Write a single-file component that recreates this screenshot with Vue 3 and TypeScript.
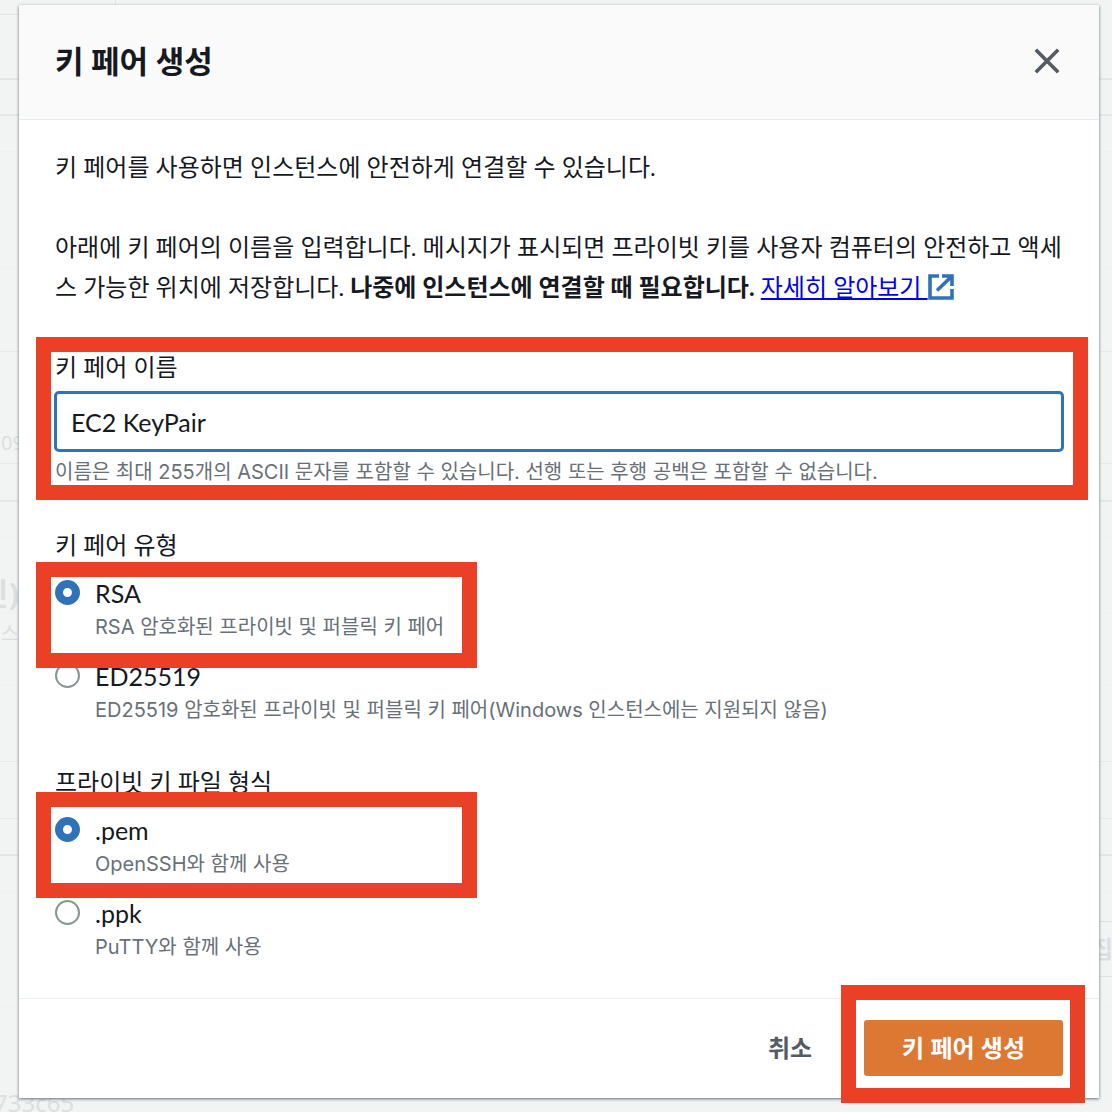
<script setup lang="ts">
import { ref } from 'vue'

interface Option {
  value: string
  label: string
  description: string
}

interface Strip {
  height: number
  tone: 'line' | 'shade' | 'faint'
  left?: string
  size?: 'value' | 'heading' | 'note'
}

const keyName = ref('EC2 KeyPair')
const keyType = ref('rsa')
const fileFormat = ref('pem')

const keyTypes: Option[] = [
  { value: 'rsa', label: 'RSA', description: 'RSA 암호화된 프라이빗 및 퍼블릭 키 페어' },
  {
    value: 'ed25519',
    label: 'ED25519',
    description: 'ED25519 암호화된 프라이빗 및 퍼블릭 키 페어(Windows 인스턴스에는 지원되지 않음)',
  },
]

const fileFormats: Option[] = [
  { value: 'pem', label: '.pem', description: 'OpenSSH와 함께 사용' },
  { value: 'ppk', label: '.ppk', description: 'PuTTY와 함께 사용' },
]

const strips: Strip[] = [
  { height: 80, tone: 'shade' },
  { height: 36, tone: 'shade' },
  { height: 36, tone: 'faint' },
  { height: 116, tone: 'faint' },
  { height: 84, tone: 'line' },
  { height: 112, tone: 'line', left: '.09', size: 'value' },
  { height: 38, tone: 'shade' },
  { height: 36, tone: 'faint' },
  { height: 76, tone: 'faint', left: '인)', size: 'heading' },
  { height: 72, tone: 'faint', left: '인스', size: 'note' },
  { height: 76, tone: 'line' },
  { height: 57, tone: 'line' },
  { height: 37, tone: 'shade' },
  { height: 36, tone: 'faint' },
  { height: 115, tone: 'faint' },
]
</script>

<template>
  <main class="screen" lang="ko">
    <div class="backdrop" aria-hidden="true">
      <div
        v-for="(strip, i) in strips"
        :key="i"
        class="strip"
        :class="[strip.tone, strip.size]"
        :style="{ height: strip.height + 'px' }"
      >
        <span v-if="strip.left">{{ strip.left }}</span>
      </div>
      <span class="ghost-tab"></span>
      <span class="ghost-edit">편집</span>
      <span class="ghost-id">733c65</span>
    </div>

    <section class="modal" role="dialog" aria-labelledby="modal-title">
      <header class="modal-header">
        <h1 id="modal-title">키 페어 생성</h1>
        <button class="close" type="button" aria-label="닫기">
          <svg viewBox="0 0 26 26" width="26" height="26" fill="none" stroke="#545b64" stroke-width="3.6">
            <path d="M1.8 1.8 24.2 24.2M24.2 1.8 1.8 24.2" />
          </svg>
        </button>
      </header>

      <form id="key-form" class="modal-body" @submit.prevent>
        <p>키 페어를 사용하면 인스턴스에 안전하게 연결할 수 있습니다.</p>
        <p>
          아래에 키 페어의 이름을 입력합니다. 메시지가 표시되면 프라이빗 키를 사용자 컴퓨터의 안전하고 액세스 가능한 위치에 저장합니다.
          <strong>나중에 인스턴스에 연결할 때 필요합니다.</strong>{{ ' ' }}<a class="learn" href="#">자세히 알아보기&nbsp;</a><svg
            class="external" viewBox="0 0 26 26" width="26" height="26" fill="none" stroke="#3072b9" stroke-width="3.6"
          >
            <path d="M11 2H2v22h22V15" />
            <path d="M14 2H24v10M23.5 2.5 9 16.5" />
          </svg>
        </p>

        <div class="field highlight">
          <label for="key-name">키 페어 이름</label>
          <input id="key-name" v-model="keyName" class="text-input" type="text" aria-describedby="key-hint" />
          <small id="key-hint" class="hint">이름은 최대 255개의 ASCII 문자를 포함할 수 있습니다. 선행 또는 후행 공백은 포함할 수 없습니다.</small>
        </div>

        <fieldset>
          <legend>키 페어 유형</legend>
          <div v-for="(o, i) in keyTypes" :key="o.value" class="option" :class="{ highlight: i === 0 }">
            <input :id="o.value" v-model="keyType" type="radio" name="key-type" :value="o.value" />
            <label :for="o.value">
              <span class="option-name">{{ o.label }}</span>
              <span class="hint">{{ o.description }}</span>
            </label>
          </div>
        </fieldset>

        <fieldset class="formats">
          <legend>프라이빗 키 파일 형식</legend>
          <div v-for="(o, i) in fileFormats" :key="o.value" class="option" :class="{ highlight: i === 0 }">
            <input :id="o.value" v-model="fileFormat" type="radio" name="file-format" :value="o.value" />
            <label :for="o.value">
              <span class="option-name">{{ o.label }}</span>
              <span class="hint">{{ o.description }}</span>
            </label>
          </div>
        </fieldset>
      </form>

      <footer class="modal-footer">
        <button class="cancel" type="button">취소</button>
        <div class="submit-wrap highlight">
          <button class="submit" type="submit" form="key-form">키 페어 생성</button>
        </div>
      </footer>
    </section>
  </main>
</template>

<style>
body {
  margin: 0;
  background: #f2f4f4;
}
</style>

<style scoped>
.screen {
  position: relative;
  min-height: 100vh;
  box-sizing: border-box;
  padding: 5px 13px 14px 19px;
  overflow: hidden;
  background: #f2f4f4;
  color: #16191f;
  font-family: Lato, 'Noto Sans CJK KR', sans-serif;
  font-size: 24px;
  line-height: 40px;
}

.backdrop {
  position: absolute;
  inset: 0;
  overflow: hidden;
  color: #dcdfdf;
  font-family: 'Noto Sans', 'Noto Sans CJK KR', sans-serif;
}

.strip {
  display: flex;
  box-sizing: border-box;
  border-bottom: 1px solid #e6e9e9;
  white-space: nowrap;
}

.strip.shade {
  border-bottom: 2px solid #e4e7e7;
}

.strip.faint {
  border-bottom-color: #eff1f1;
}

.strip span {
  width: 19px;
  display: flex;
  justify-content: flex-end;
}

.strip.value {
  align-items: flex-end;
  font-size: 20px;
}

.strip.value span {
  width: 24px;
}

.strip.heading {
  align-items: flex-end;
  font-size: 31px;
  font-weight: 700;
}

.strip.note {
  font-size: 20px;
}

.ghost-tab {
  position: absolute;
  top: -20px;
  left: -4px;
  width: 118px;
  height: 33px;
  border: 1px solid #e2e5e5;
}

.ghost-edit {
  position: absolute;
  top: 921px;
  right: -20px;
  width: 80px;
  height: 54px;
  border: 1px solid #dfe2e2;
  font-weight: 700;
  line-height: 54px;
  text-align: center;
}

.ghost-id {
  position: absolute;
  top: 1083px;
  left: -6px;
}

.modal {
  position: relative;
  background: #fff;
  box-shadow: 0 1px 3px #5f6b7a;
}

.modal-header {
  display: flex;
  align-items: center;
  justify-content: space-between;
  padding: 36px 39px 38px 36px;
  border-bottom: 1px solid #eaeded;
  background: #fafafa;
}

h1 {
  margin: 0;
  font-size: 31px;
  line-height: 40px;
}

button {
  border: 0;
  padding: 0;
  background: none;
  font: inherit;
  font-family: 'Noto Sans', 'Noto Sans CJK KR', sans-serif;
  font-weight: 700;
}

.close,
.close svg {
  display: block;
}

.modal-body {
  display: flex;
  flex-direction: column;
  gap: 36px;
  padding: 27px 36px 35px;
}

p {
  margin: 0 0 4px;
  word-break: break-all;
}

.learn {
  color: #00e;
}

.external {
  vertical-align: -4px;
}

.highlight {
  position: relative;
}

.highlight::after {
  content: '';
  position: absolute;
  border: 15px solid #ea4026;
  pointer-events: none;
  z-index: 1;
}

.field {
  display: flex;
  flex-direction: column;
}

.field.highlight::after {
  inset: -10px -25px -11px -19px;
}

.text-input {
  box-sizing: border-box;
  height: 61px;
  margin: 4px -1px;
  padding: 0 14px;
  border: 3px solid #3072b9;
  border-radius: 5px;
  outline: 0;
  background: #fff;
  color: inherit;
  font: inherit;
  font-size: 25px;
}

.hint {
  display: block;
  color: #687078;
  font-family: Inter, 'Noto Sans CJK KR', sans-serif;
  font-size: 20px;
  line-height: 32px;
}

.field .hint {
  margin-bottom: 1px;
}

fieldset {
  display: flex;
  flex-direction: column;
  gap: 15px;
  min-width: 0;
  margin: 0;
  padding: 0;
  border: 0;
}

legend {
  padding: 0 0 10px;
}

.option {
  display: flex;
  gap: 15px;
}

.option.highlight::after {
  top: -13px;
  left: -19px;
  width: 411px;
  height: 76px;
}

.formats .option.highlight::after {
  top: -20px;
}

.option input {
  appearance: none;
  box-sizing: border-box;
  flex: none;
  width: 25px;
  height: 25px;
  margin: 5px 0 0;
  border: 2px solid #879596;
  border-radius: 50%;
  background: #fff;
}

.option input:checked {
  border: 8px solid #3072b9;
}

.option-name {
  display: block;
  font-size: 25px;
  line-height: 36px;
}

.modal-footer {
  display: flex;
  align-items: center;
  justify-content: flex-end;
  gap: 52px;
  padding: 21px 36px 22px;
  border-top: 1px solid #eaeded;
}

.cancel {
  color: #545b64;
}

.submit-wrap.highlight::after {
  inset: -35px -22px -27px -23px;
}

.submit {
  display: block;
  padding: 8px 38px;
  border-radius: 3px;
  background: #dd7832;
  color: #fff;
}
</style>
